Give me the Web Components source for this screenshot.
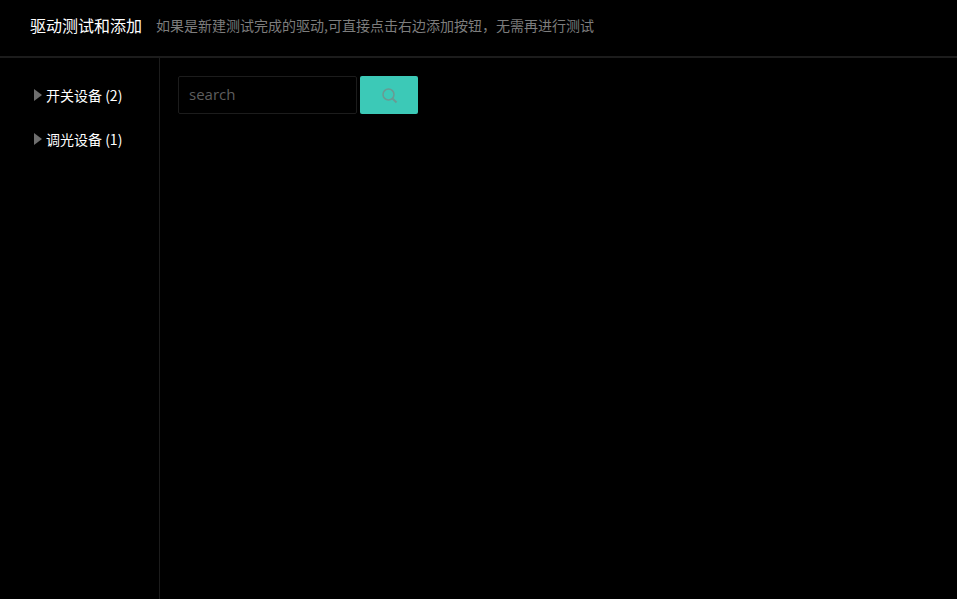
<!DOCTYPE html>
<html lang="zh-CN">
  <head>
    <meta charset="UTF-8" />
    <title>驱动测试和添加</title>
    <style>
      html, body { margin: 0; height: 100%; background: #000; }
      body { font-family: "Noto Sans CJK SC", "Noto Sans", sans-serif; overflow: hidden; }
    </style>
  </head>
  <body>
    <template id="page-header">
      <style>
        :host { display: flex; align-items: center; box-sizing: border-box; height: 58px; padding: 0 0 7px 30px; border-bottom: 2px solid #1c1c1c; }
        .title { font-size: 16px; color: #fff; margin-right: 14px; }
        .sub { font-size: 14px; color: #7d7d7d; }
      </style>
      <span class="title"><slot name="title"></slot></span>
      <span class="sub"><slot name="sub"></slot></span>
    </template>

    <template id="tree-item">
      <style>
        :host { display: flex; align-items: center; height: 44px; padding-left: 34px; font-size: 14px; color: #fff; }
        i { width: 0; height: 0; margin-right: 4px; border-left: 8px solid #6e6e6e; border-top: 6px solid transparent; border-bottom: 6px solid transparent; }
      </style>
      <i></i><slot></slot>
    </template>

    <template id="side-tree">
      <style>
        :host { display: block; box-sizing: border-box; width: 160px; padding-top: 15px; border-right: 1px solid #1c1c1c; }
      </style>
      <slot></slot>
    </template>

    <template id="search-box">
      <style>
        :host { display: flex; gap: 3px; }
        input { box-sizing: border-box; width: 179px; height: 38px; padding: 0 10px 2px; background: #000; border: 1px solid #1c1c1c; border-radius: 2px; outline: none; font: 15px "Open Sans", sans-serif; color: #777; }
        input::placeholder { color: #5e5e5e; opacity: 1; }
        button { display: flex; align-items: center; justify-content: center; width: 58px; height: 38px; padding: 0; background: #3cc9b7; border: 0; border-radius: 2px; }
      </style>
      <input placeholder="search" />
      <button>
        <svg width="18" height="18" viewBox="0 0 18 18" fill="none" stroke="#6a9a93">
          <circle cx="8.5" cy="8.5" r="5.5" stroke-width="1.5" />
          <path d="M12.5 12.5 L16.5 16.5" stroke-width="2" />
        </svg>
      </button>
    </template>

    <template id="app-shell">
      <style>
        :host { display: flex; flex-direction: column; height: 100vh; }
        .body { display: flex; flex: 1; }
        .main { padding: 18px; }
      </style>
      <slot name="header"></slot>
      <div class="body">
        <slot name="side"></slot>
        <div class="main"><slot></slot></div>
      </div>
    </template>

    <app-shell>
      <page-header slot="header">
        <span slot="title">驱动测试和添加</span>
        <span slot="sub">如果是新建测试完成的驱动,可直接点击右边添加按钮，无需再进行测试</span>
      </page-header>
      <side-tree slot="side">
        <tree-item>开关设备 (2)</tree-item>
        <tree-item>调光设备 (1)</tree-item>
      </side-tree>
      <search-box></search-box>
    </app-shell>

    <script>
      // every element just clones its template of the same name
      for (const name of ['page-header', 'tree-item', 'side-tree', 'search-box', 'app-shell']) {
        customElements.define(
          name,
          class extends HTMLElement {
            constructor() {
              super()
              const template = document.getElementById(name)
              this.attachShadow({ mode: 'open' }).appendChild(template.content.cloneNode(true))
            }
          }
        )
      }
    </script>
  </body>
</html>
